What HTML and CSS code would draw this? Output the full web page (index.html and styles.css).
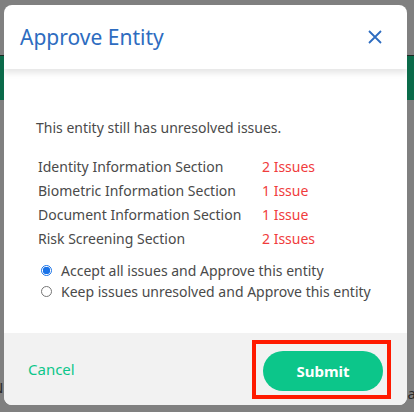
FILE: index.html
```html
<!DOCTYPE html>
<html lang="en">
<head>
    <meta charset="utf-8">
    <link rel="stylesheet" href="styles.css">
</head>
<body>
    <div class="page">
        <div class="page-bar"></div>
        <div class="page-row"><span>N</span><span>a</span></div>
    </div>
    <div class="overlay">
        <div class="modal">
            <header class="modal-head">
                <h2>Approve Entity</h2>
                <svg class="close" width="16" height="16" viewBox="0 0 16 16">
                    <path d="M2 2L14 14M14 2L2 14" stroke="#2d6cc0" stroke-width="1.8" fill="none"/>
                </svg>
            </header>
            <div class="modal-body">
                <p class="intro">This entity still has unresolved issues.</p>
                <table class="issues">
                    <tr><td>Identity Information Section</td><td class="count">2 Issues</td></tr>
                    <tr><td>Biometric Information Section</td><td class="count">1 Issue</td></tr>
                    <tr><td>Document Information Section</td><td class="count">1 Issue</td></tr>
                    <tr><td>Risk Screening Section</td><td class="count">2 Issues</td></tr>
                </table>
                <div class="options">
                    <label class="option"><span class="radio checked"></span>Accept all issues and Approve this entity</label>
                    <label class="option"><span class="radio"></span>Keep issues unresolved and Approve this entity</label>
                </div>
            </div>
            <footer class="modal-foot">
                <a href="#" class="cancel">Cancel</a>
                <div class="highlight">
                    <button class="submit">Submit</button>
                </div>
            </footer>
        </div>
    </div>
</body>
</html>
```

FILE: styles.css
```css
body{
    margin: 0;
    padding: 0;
    background-color: #808080;
    font-family: 'Noto Sans', sans-serif;
    width: 414px;
    height: 412px;
    overflow: hidden;
}
.page{
    padding-top: 55px;
}
.page-bar{
    height: 44px;
    background-color: #0b6b4a;
    border-top: 1px solid #1d2a24;
}
.page-row{
    margin-top: 277px;
    display: flex;
    justify-content: space-between;
    font-size: 15px;
    color: #2a2a2a;
    padding: 0 0 0 0;
}
.page-row span:first-child{
    margin-left: -8px;
}
.page-row span:last-child{
    margin-right: -2px;
    margin-top: 6px;
}
.overlay{
    position: absolute;
    top: 5px;
    left: 4px;
}
.modal{
    width: 403px;
    height: 400px;
    background-color: #fff;
    border-radius: 8px;
    overflow: hidden;
    display: flex;
    flex-direction: column;
}
.modal-head{
    height: 64px;
    display: flex;
    align-items: center;
    justify-content: space-between;
    padding: 0 24px 0 16px;
    box-shadow: 0 4px 6px rgba(0,0,0,0.10);
    position: relative;
}
.modal-head h2{
    margin: 0;
    font-size: 21px;
    font-weight: normal;
    color: #2d6cc0;
}
.modal-body{
    flex: 1;
    padding: 49px 0 0 32px;
    color: #4a4a4a;
    font-size: 14px;
}
.intro{
    margin: 0 0 17px 0;
}
.issues{
    border-collapse: collapse;
    margin-left: 2px;
}
.issues td{
    padding: 0;
    height: 24px;
}
.issues .count{
    color: #f03c3c;
    padding-left: 0;
}
.issues td:first-child{
    width: 224px;
}
.options{
    margin-top: 10px;
    margin-left: 5px;
}
.option{
    display: flex;
    align-items: center;
    height: 21px;
}
.radio{
    width: 11px;
    height: 11px;
    border: 1px solid #767676;
    border-radius: 50%;
    margin-right: 9px;
    box-sizing: border-box;
    background: #fff;
}
.radio.checked{
    border: 1px solid #1a73e8;
    background: radial-gradient(circle, #1a73e8 0 3.5px, #fff 4px);
}
.modal-foot{
    height: 72px;
    background-color: #f2f2f2;
    display: flex;
    align-items: center;
    justify-content: space-between;
    padding: 0 16px 0 24px;
}
.cancel{
    color: #0cc68a;
    text-decoration: none;
    font-size: 15px;
}
.highlight{
    border: 4px solid #ff1a00;
    padding: 7px 4px 4px 7px;
}
.submit{
    width: 120px;
    height: 40px;
    border: none;
    border-radius: 20px;
    background-color: #0cc68a;
    color: #fff;
    font-family: 'Noto Sans', sans-serif;
    font-weight: bold;
    font-size: 15px;
}
```
